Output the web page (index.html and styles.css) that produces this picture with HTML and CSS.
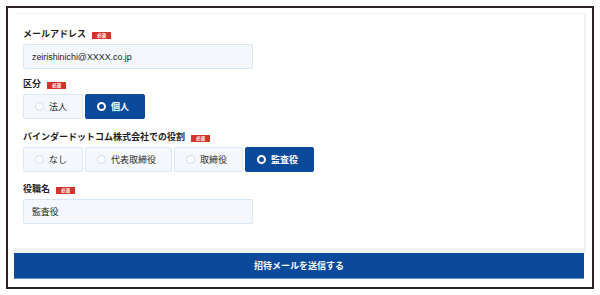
FILE: index.html
```html
<!DOCTYPE html>
<html lang="ja">
<head>
<meta charset="utf-8">
<link rel="stylesheet" href="styles.css">
</head>
<body>
<div class="frame">
  <div class="panel">
    <div class="card">
      <div class="field field--tight">
        <div class="label">メールアドレス<span class="badge">必須</span></div>
        <div class="input">zeirishinichi@XXXX.co.jp</div>
      </div>
      <div class="field field--wide">
        <div class="label">区分<span class="badge">必須</span></div>
        <div class="radios">
          <div class="radio"><span class="dot"></span>法人</div>
          <div class="radio radio--on"><span class="dot"></span>個人</div>
        </div>
      </div>
      <div class="field">
        <div class="label">バインダードットコム株式会社での役割<span class="badge">必須</span></div>
        <div class="radios">
          <div class="radio"><span class="dot"></span>なし</div>
          <div class="radio"><span class="dot"></span>代表取締役</div>
          <div class="radio"><span class="dot"></span>取締役</div>
          <div class="radio radio--on"><span class="dot"></span>監査役</div>
        </div>
      </div>
      <div class="field field--last">
        <div class="label">役職名<span class="badge">必須</span></div>
        <div class="input">監査役</div>
      </div>
    </div>
  </div>
  <div class="submit">招待メールを送信する</div>
</div>
</body>
</html>
```
FILE: styles.css
```css
* { box-sizing: border-box; }
html, body { margin: 0; padding: 0; background: #fff; }
body {
  font-family: "Liberation Sans", "Noto Sans CJK JP", sans-serif;
  color: #2a2a2a;
}
.frame {
  margin: 6px 6px 0 6px;
  width: 588px;
  height: 283px;
  border: 2px solid #2b2422;
  padding: 5px 6px 7px 6px;
  display: flex;
  flex-direction: column;
}
.panel {
  background: #f1f1f1;
  padding: 1px 2px 5px 0;
}
.card {
  background: #fff;
  padding: 14px 9px 24px 9px;
  height: 234px;
}
.field { margin-bottom: 11px; }
.field--tight { margin-bottom: 9px; }
.field--wide { margin-bottom: 12px; }
.field--last { margin-bottom: 0; }
.label {
  display: flex;
  align-items: center;
  height: 12px;
  margin-bottom: 4px;
  font-family: "Noto Sans CJK JP", sans-serif;
  font-weight: 700;
  font-size: 9px;
  line-height: 12px;
  color: #1e1e1e;
}
.badge {
  display: inline-flex;
  align-items: center;
  justify-content: center;
  width: 19px;
  height: 7px;
  margin-left: 6px;
  margin-top: 2px;
  background: #d2332a;
  color: #fff;
  font-size: 4.5px;
  line-height: 7px;
  font-weight: 700;
}
.input {
  width: 230px;
  height: 25px;
  border: 1px solid #d9e6f4;
  background: #f4f8fc;
  border-radius: 2px;
  padding-left: 8px;
  display: flex;
  align-items: center;
  font-size: 8.9px;
  color: #222;
}
.radios { display: flex; gap: 2px; }
.radio {
  height: 25px;
  display: flex;
  align-items: center;
  gap: 5px;
  padding: 0 15px 0 11px;
  border: 1px solid #dce7f3;
  background: #f4f8fc;
  border-radius: 2px;
  font-family: "Noto Sans CJK JP", sans-serif;
  font-size: 9px;
  color: #2a2a2a;
}
.dot {
  width: 9px;
  height: 9px;
  border-radius: 50%;
  background: #fff;
  border: 1px solid #d3dce8;
}
.radio--on {
  background: #0b4a9b;
  border-color: #0b4a9b;
  color: #fff;
  font-weight: 700;
}
.radio--on .dot {
  background: #0b4a9b;
  border: 2.5px solid #fff;
}
.submit {
  height: 26px;
  background: #0b4a9b;
  border-bottom: 1px solid #5e8fd3;
  margin-right: 2px;
  display: flex;
  align-items: center;
  justify-content: center;
  color: #fff;
  font-family: "Noto Sans CJK JP", sans-serif;
  font-weight: 700;
  font-size: 9px;
}
```
